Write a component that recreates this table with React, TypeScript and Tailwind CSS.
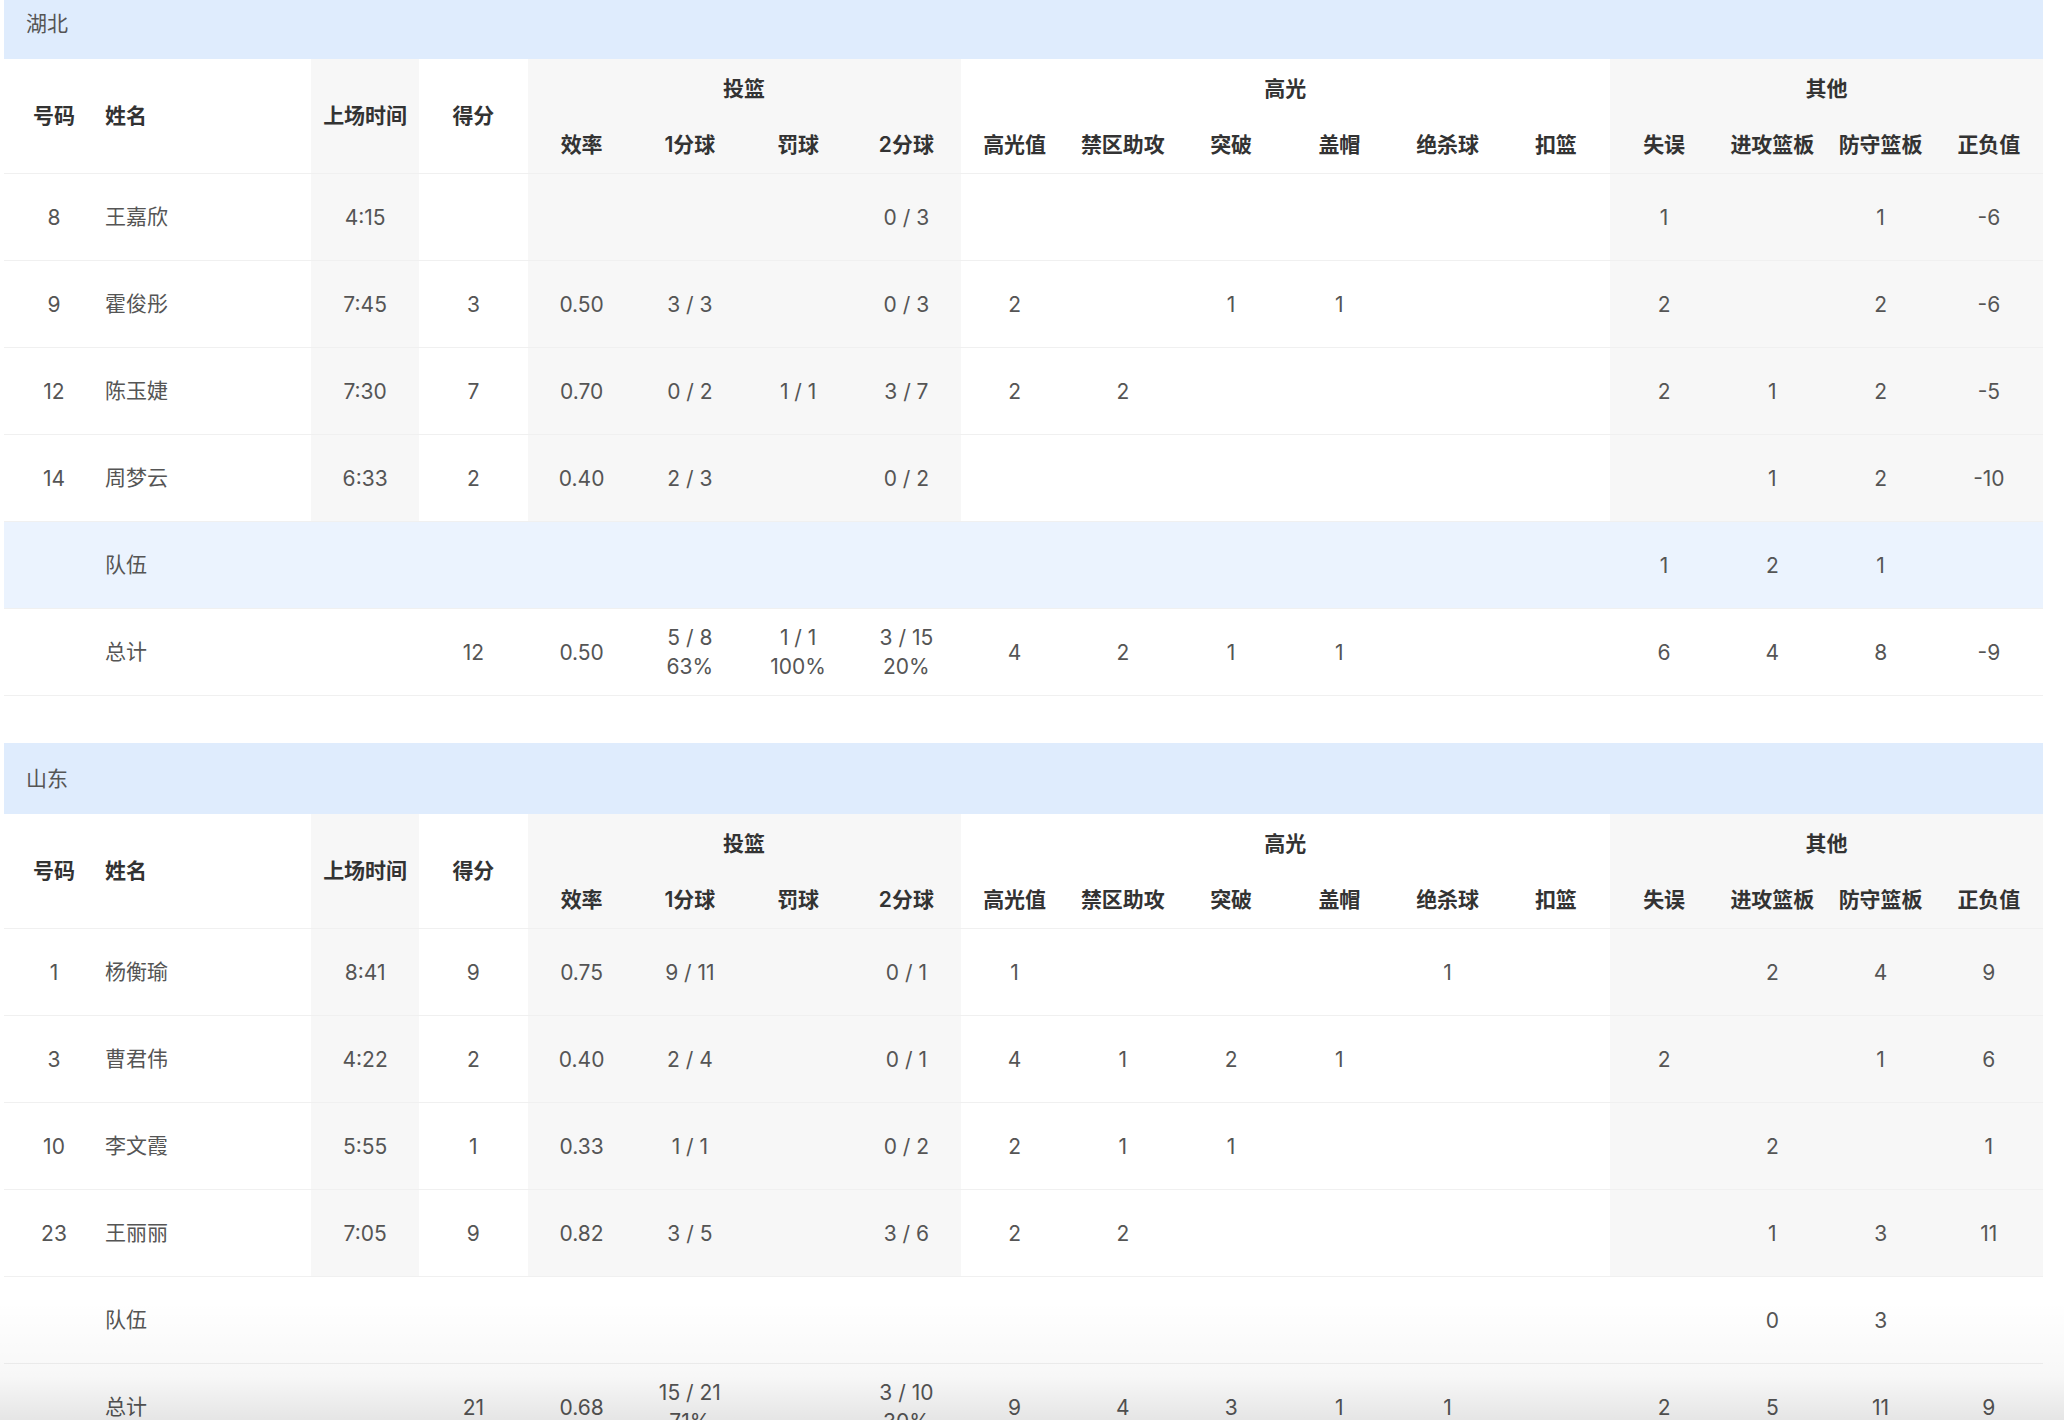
import React from 'react';

type Row = {
    no: string;
    name: string;
    time?: string;
    pts?: string;
    eff?: string;
    one?: string[];
    ft?: string[];
    two?: string[];
    hl?: string;
    paint?: string;
    drive?: string;
    blk?: string;
    clutch?: string;
    dunk?: string;
    to?: string;
    oreb?: string;
    dreb?: string;
    pm?: string;
    kind?: 'player' | 'team' | 'total';
};

interface Team {
    name: string;
    teamRowBlue: boolean;
    rows: Row[];
}

const teams: Team[] = [
    {
        name: '湖北',
        teamRowBlue: true,
        rows: [
            { no: '8', name: '王嘉欣', time: '4:15', two: ['0 / 3'], to: '1', dreb: '1', pm: '-6' },
            { no: '9', name: '霍俊彤', time: '7:45', pts: '3', eff: '0.50', one: ['3 / 3'], two: ['0 / 3'], hl: '2', drive: '1', blk: '1', to: '2', dreb: '2', pm: '-6' },
            { no: '12', name: '陈玉婕', time: '7:30', pts: '7', eff: '0.70', one: ['0 / 2'], ft: ['1 / 1'], two: ['3 / 7'], hl: '2', paint: '2', to: '2', oreb: '1', dreb: '2', pm: '-5' },
            { no: '14', name: '周梦云', time: '6:33', pts: '2', eff: '0.40', one: ['2 / 3'], two: ['0 / 2'], oreb: '1', dreb: '2', pm: '-10' },
            { no: '', name: '队伍', kind: 'team', to: '1', oreb: '2', dreb: '1' },
            { no: '', name: '总计', kind: 'total', pts: '12', eff: '0.50', one: ['5 / 8', '63%'], ft: ['1 / 1', '100%'], two: ['3 / 15', '20%'], hl: '4', paint: '2', drive: '1', blk: '1', to: '6', oreb: '4', dreb: '8', pm: '-9' },
        ],
    },
    {
        name: '山东',
        teamRowBlue: false,
        rows: [
            { no: '1', name: '杨衡瑜', time: '8:41', pts: '9', eff: '0.75', one: ['9 / 11'], two: ['0 / 1'], hl: '1', clutch: '1', oreb: '2', dreb: '4', pm: '9' },
            { no: '3', name: '曹君伟', time: '4:22', pts: '2', eff: '0.40', one: ['2 / 4'], two: ['0 / 1'], hl: '4', paint: '1', drive: '2', blk: '1', to: '2', dreb: '1', pm: '6' },
            { no: '10', name: '李文霞', time: '5:55', pts: '1', eff: '0.33', one: ['1 / 1'], two: ['0 / 2'], hl: '2', paint: '1', drive: '1', oreb: '2', pm: '1' },
            { no: '23', name: '王丽丽', time: '7:05', pts: '9', eff: '0.82', one: ['3 / 5'], two: ['3 / 6'], hl: '2', paint: '2', oreb: '1', dreb: '3', pm: '11' },
            { no: '', name: '队伍', kind: 'team', oreb: '0', dreb: '3' },
            { no: '', name: '总计', kind: 'total', pts: '21', eff: '0.68', one: ['15 / 21', '71%'], two: ['3 / 10', '30%'], hl: '9', paint: '4', drive: '3', blk: '1', clutch: '1', to: '2', oreb: '5', dreb: '11', pm: '9' },
        ],
    },
];

const gridCols = 'grid grid-cols-[100px_207px_repeat(16,minmax(0,1fr))]';

const Cell: React.FC<{ gray?: boolean; children?: React.ReactNode }> = ({ gray, children }) => (
    <div className={`flex flex-col items-center justify-center leading-[29px] ${gray ? 'bg-[#f7f7f7]' : ''}`}>
        {children}
    </div>
);

const Lines: React.FC<{ v?: string[] }> = ({ v }) => (
    <>
        {v?.map((line, i) => (
            <span key={i}>{line}</span>
        ))}
    </>
);

const Header: React.FC = () => (
    <div className={`${gridCols} grid-rows-[57px_57px] border-b border-[#f0f0f0] font-semibold text-[#333]`}>
        <div className="row-span-2 flex items-center justify-center">号码</div>
        <div className="row-span-2 flex items-center pl-[1px]">姓名</div>
        <div className="row-span-2 flex items-center justify-center bg-[#f7f7f7]">上场时间</div>
        <div className="row-span-2 flex items-center justify-center">得分</div>
        <div className="col-span-4 flex items-end justify-center pb-[12px] bg-[#f7f7f7]">投篮</div>
        <div className="col-span-6 flex items-end justify-center pb-[12px]">高光</div>
        <div className="col-span-4 flex items-end justify-center pb-[12px] bg-[#f7f7f7]">其他</div>
        {['效率', '1分球', '罚球', '2分球'].map((t) => (
            <div key={t} className="flex items-start justify-center pt-[13px] bg-[#f7f7f7]">{t}</div>
        ))}
        {['高光值', '禁区助攻', '突破', '盖帽', '绝杀球', '扣篮'].map((t) => (
            <div key={t} className="flex items-start justify-center pt-[13px]">{t}</div>
        ))}
        {['失误', '进攻篮板', '防守篮板', '正负值'].map((t) => (
            <div key={t} className="flex items-start justify-center pt-[13px] bg-[#f7f7f7]">{t}</div>
        ))}
    </div>
);

const DataRow: React.FC<{ row: Row; blue: boolean }> = ({ row, blue }) => {
    const g = !row.kind || row.kind === 'player';
    return (
        <div className={`${gridCols} h-[87px] border-b border-[#f0f0f0] text-[#555] ${blue ? 'bg-[#ebf3fe]' : ''}`}>
            <Cell>{row.no}</Cell>
            <div className="flex items-center pl-[1px]">{row.name}</div>
            <Cell gray={g}>{row.time}</Cell>
            <Cell>{row.pts}</Cell>
            <Cell gray={g}>{row.eff}</Cell>
            <Cell gray={g}><Lines v={row.one} /></Cell>
            <Cell gray={g}><Lines v={row.ft} /></Cell>
            <Cell gray={g}><Lines v={row.two} /></Cell>
            <Cell>{row.hl}</Cell>
            <Cell>{row.paint}</Cell>
            <Cell>{row.drive}</Cell>
            <Cell>{row.blk}</Cell>
            <Cell>{row.clutch}</Cell>
            <Cell>{row.dunk}</Cell>
            <Cell gray={g}>{row.to}</Cell>
            <Cell gray={g}>{row.oreb}</Cell>
            <Cell gray={g}>{row.dreb}</Cell>
            <Cell gray={g}>{row.pm}</Cell>
        </div>
    );
};

const TeamTable: React.FC<{ team: Team }> = ({ team }) => (
    <div>
        <div className="flex h-[71px] items-center bg-[#dfecfd] pl-[22px] text-[#555]">{team.name}</div>
        <Header />
        {team.rows.map((row, i) => (
            <DataRow key={i} row={row} blue={row.kind === 'team' && team.teamRowBlue} />
        ))}
    </div>
);

export default function App() {
    return (
        <div
            className="relative min-h-[1420px] overflow-hidden bg-white text-[21px]"
            style={{ fontFamily: 'Inter, "Noto Sans CJK SC", sans-serif' }}
        >
            <div className="-mt-[12px] ml-[4px] flex w-[2039px] flex-col gap-[47px]">
                {teams.map((team) => (
                    <TeamTable key={team.name} team={team} />
                ))}
            </div>
            <div className="pointer-events-none absolute inset-x-0 bottom-0 h-[150px] bg-linear-to-b from-transparent via-[#00000008] to-[#00000026]" />
        </div>
    );
}
